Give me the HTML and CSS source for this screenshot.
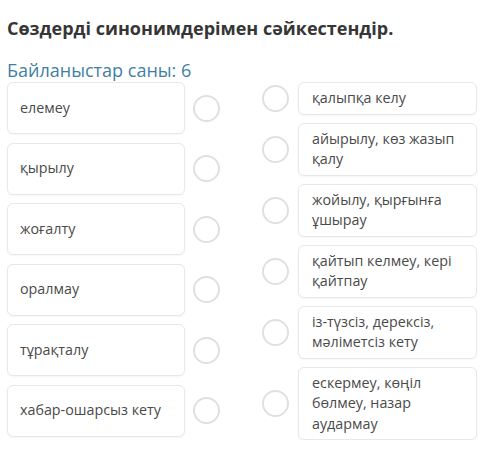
FILE: index.html
```html
<!DOCTYPE html>
<html lang="kk">
<head>
<meta charset="utf-8">
<link rel="stylesheet" href="styles.css">
</head>
<body>
<div class="page">
  <h1 class="title">Сөздерді синонимдерімен сәйкестендір.</h1>
  <div class="count">Байланыстар саны: 6</div>
  <div class="match">
    <div class="col col-left">
      <div class="row"><div class="box box-left">елемеу</div><span class="dot"></span></div>
      <div class="row"><div class="box box-left">қырылу</div><span class="dot"></span></div>
      <div class="row"><div class="box box-left">жоғалту</div><span class="dot"></span></div>
      <div class="row"><div class="box box-left">оралмау</div><span class="dot"></span></div>
      <div class="row"><div class="box box-left">тұрақталу</div><span class="dot"></span></div>
      <div class="row"><div class="box box-left">хабар-ошарсыз кету</div><span class="dot"></span></div>
    </div>
    <div class="col col-right">
      <div class="row"><span class="dot"></span><div class="box box-right">қалыпқа келу</div></div>
      <div class="row"><span class="dot"></span><div class="box box-right">айырылу, көз жазып қалу</div></div>
      <div class="row"><span class="dot"></span><div class="box box-right">жойылу, қырғынға ұшырау</div></div>
      <div class="row"><span class="dot"></span><div class="box box-right">қайтып келмеу, кері қайтпау</div></div>
      <div class="row"><span class="dot"></span><div class="box box-right">із-түзсіз, дерексіз, мәліметсіз кету</div></div>
      <div class="row"><span class="dot"></span><div class="box box-right">ескермеу, көңіл бөлмеу, назар аудармау</div></div>
    </div>
  </div>
</div>
</body>
</html>
```

FILE: styles.css
```css
html, body {
  margin: 0;
  padding: 0;
  background: #ffffff;
}

body {
  font-family: "Open Sans", "Noto Sans", "DejaVu Sans", sans-serif;
  color: #444444;
}

.page {
  padding: 17px 7px 0 7px;
}

.title {
  margin: 0;
  font-size: 18px;
  line-height: 23px;
  font-weight: 700;
  color: #363636;
}

.count {
  margin-top: 19px;
  font-size: 18px;
  line-height: 23px;
  color: #3f7fa5;
}

.match {
  display: flex;
  gap: 42px;
}

.col {
  display: flex;
  flex-direction: column;
}

.col-left {
  gap: 8.5px;
}

.col-right {
  gap: 8px;
}

.row {
  display: flex;
  align-items: center;
}

.col-left .row {
  gap: 8px;
}

.col-right .row {
  gap: 9px;
}

.box {
  box-sizing: border-box;
  background: #ffffff;
  border: 1px solid #e8e8e8;
  border-radius: 6px;
  box-shadow: 0 1px 2px rgba(0, 0, 0, 0.04);
  font-size: 14.3px;
  line-height: 20.5px;
  color: #4a4a4a;
}

.box-left {
  width: 178px;
  height: 52px;
  padding: 0 12px;
  display: flex;
  align-items: center;
}

.box-right {
  width: 179px;
  padding: 5px 13px;
}

.dot {
  box-sizing: border-box;
  flex: none;
  width: 27px;
  height: 27px;
  border: 2px solid #e0e0e0;
  border-radius: 50%;
  background: #ffffff;
}
```
